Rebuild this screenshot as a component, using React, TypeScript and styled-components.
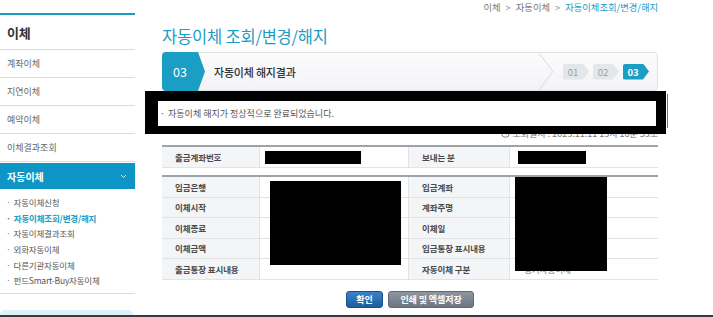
import React from 'react';
import styled, { createGlobalStyle, css } from 'styled-components';

const TEAL = '#1a9cc4';

const GlobalStyle = createGlobalStyle`
  * { box-sizing: border-box; }
  body {
    margin: 0;
    background: #fff;
    font-family: "Noto Sans CJK KR", "Noto Sans", sans-serif;
    color: #444;
  }
`;

const Page = styled.div`
  display: flex;
  height: 317px;
  overflow: hidden;
  border-bottom: 2px solid #3a3a3a;
`;

/* ---------- sidebar ---------- */

const Sidebar = styled.aside`
  width: 135px;
  flex-shrink: 0;
  padding-top: 13px;
  display: flex;
  flex-direction: column;
`;

const SideTitle = styled.div`
  height: 37px;
  border-top: 2px solid ${TEAL};
  border-bottom: 1px solid #dcdcdc;
  padding: 0 7px;
  display: flex;
  align-items: center;
  font-size: 13px;
  font-weight: 700;
  color: #333;
  letter-spacing: -0.3px;
`;

const MenuItem = styled.div`
  height: 28px;
  border-bottom: 1px solid #dcdcdc;
  padding: 0 7px;
  display: flex;
  align-items: center;
  font-size: 9px;
  color: #666;
`;

const ActiveMenu = styled.div`
  height: 26px;
  margin-top: 1px;
  background: #0c95c5;
  padding: 0 8px 0 7px;
  display: flex;
  align-items: center;
  justify-content: space-between;
  font-size: 10px;
  font-weight: 700;
  color: #fff;
`;

const SubList = styled.ul`
  list-style: none;
  margin: 0;
  padding: 6px 0 4px;
  border-bottom: 1px solid #dcdcdc;
`;

const SubItem = styled.li<{ $active?: boolean }>`
  height: 15.7px;
  line-height: 15.7px;
  padding-left: 6px;
  font-size: 8.5px;
  letter-spacing: -0.2px;
  color: #555;
  white-space: nowrap;
  ${({ $active }) =>
    $active &&
    css`
      color: ${TEAL};
      font-weight: 700;
    `}
  &::before {
    content: '·';
    margin-right: 3px;
    color: #777;
  }
`;

const SideBanner = styled.div`
  margin-top: 16px;
  width: 133px;
  flex: 1;
  background: #def0f9;
  border-radius: 5px 5px 0 0;
`;

/* ---------- main ---------- */

const Main = styled.main`
  flex: 1;
  padding: 0 55px 0 27px;
  display: flex;
  flex-direction: column;
`;

const Breadcrumb = styled.div`
  height: 14px;
  line-height: 14px;
  text-align: right;
  font-size: 9.3px;
  color: #777;
  white-space: nowrap;
`;

const Crumb = styled.span<{ $current?: boolean }>`
  color: ${({ $current }) => ($current ? TEAL : '#777')};
`;

const CrumbSep = styled.span`
  margin: 0 5px;
  color: #999;
`;

const Title = styled.h1`
  margin: 11px 0 0;
  height: 22px;
  line-height: 22px;
  font-size: 16.5px;
  font-weight: 400;
  color: ${TEAL};
  letter-spacing: -0.2px;
`;

const StepBar = styled.div`
  margin-top: 5px;
  height: 39px;
  border: 1px solid #dfe2e6;
  border-radius: 4px;
  background: linear-gradient(#fcfcfd, #f2f3f5);
  display: flex;
  align-items: center;
  padding-right: 8px;
`;

const StepTab = styled.div`
  align-self: stretch;
  margin: -1px 0 -1px -1px;
  width: 43px;
  padding-right: 7px;
  background: #1a9ec3;
  border-radius: 4px 0 0 4px;
  clip-path: polygon(0 0, 36px 0, 43px 50%, 36px 100%, 0 100%);
  display: flex;
  align-items: center;
  justify-content: center;
  color: #fff;
  font-size: 12.5px;
`;

const StepName = styled.div`
  margin-left: 9px;
  flex: 1;
  font-size: 11px;
  font-weight: 500;
  color: #333;
  letter-spacing: -0.2px;
`;

const StepDivider = styled.svg`
  align-self: stretch;
  width: 15px;
  margin-right: 9px;
`;

const Chips = styled.div`
  display: flex;
  gap: 4px;
`;

const Chip = styled.div<{ $on?: boolean }>`
  width: 26px;
  height: 16px;
  padding-right: 6px;
  border-radius: 2px;
  clip-path: polygon(0 0, 20px 0, 26px 50%, 20px 100%, 0 100%);
  display: flex;
  align-items: center;
  justify-content: center;
  font-size: 9.5px;
  background: ${({ $on }) => ($on ? '#1a9ec3' : '#e4e7ea')};
  color: ${({ $on }) => ($on ? '#fff' : '#9aa0a6')};
  font-weight: ${({ $on }) => ($on ? 700 : 400)};
`;

const Notice = styled.div`
  position: relative;
  z-index: 1;
  margin: 0 -8px 0 -17px;
  height: 43px;
  background: #000;
  padding: 10px 10px 8px 13px;
  &::after {
    content: '';
    position: absolute;
    right: -2px;
    top: 3px;
    bottom: 6px;
    width: 1.5px;
    background: #e0453c;
  }
`;

const NoticeText = styled.div`
  height: 25px;
  line-height: 25px;
  background: #fff;
  padding-left: 2px;
  font-size: 9px;
  color: #555;
  white-space: nowrap;
  &::before {
    content: '·';
    margin-right: 3px;
  }
`;

const DateRow = styled.div`
  margin-top: -6px;
  height: 11px;
  display: flex;
  justify-content: flex-end;
  align-items: center;
  gap: 3px;
  font-size: 9px;
  color: #777;
  white-space: nowrap;
`;

const InfoTable = styled.div<{ $rowHeight: number; $gap: number }>`
  position: relative;
  margin-top: ${({ $gap }) => $gap}px;
  display: grid;
  grid-template-columns: 98px 149px 101px 1fr;
  grid-auto-rows: ${({ $rowHeight }) => $rowHeight}px;
  border-top: 2px solid #9ea3a9;
`;

const Label = styled.div`
  background: #f4f5f7;
  border-bottom: 1px solid #e1e3e6;
  border-right: 1px solid #e1e3e6;
  padding-left: 13px;
  display: flex;
  align-items: center;
  font-size: 8.5px;
  font-weight: 700;
  color: #4a4a4a;
  letter-spacing: -0.1px;
  white-space: nowrap;
`;

const Value = styled.div<{ $divider?: boolean; $pad?: number }>`
  border-bottom: 1px solid #e1e3e6;
  border-right: ${({ $divider }) => ($divider ? '1px solid #e1e3e6' : 'none')};
  padding-left: ${({ $pad = 8 }) => $pad}px;
  display: flex;
  align-items: center;
  font-size: 8.5px;
  color: #777;
`;

const InlineMask = styled.span<{ $w: number }>`
  display: block;
  width: ${({ $w }) => $w}px;
  height: 13px;
  background: #000;
`;

const BlockMask = styled.div<{ $left: number; $top: number; $w: number; $h: number }>`
  position: absolute;
  left: ${({ $left }) => $left}px;
  top: ${({ $top }) => $top}px;
  width: ${({ $w }) => $w}px;
  height: ${({ $h }) => $h}px;
  background: #000;
`;

const ButtonRow = styled.div`
  margin-top: 11px;
  display: flex;
  justify-content: center;
  gap: 5px;
`;

const Button = styled.button<{ $primary?: boolean; $w: number }>`
  width: ${({ $w }) => $w}px;
  height: 17px;
  padding: 0;
  border-radius: 3px;
  font-family: inherit;
  font-size: 9px;
  font-weight: 700;
  color: #fff;
  letter-spacing: -0.1px;
  ${({ $primary }) =>
    $primary
      ? css`
          background: linear-gradient(#3a83c8, #1c5d9e);
          border: 1px solid #1b4f86;
        `
      : css`
          background: linear-gradient(#8d97a2, #6c7682);
          border: 1px solid #5f6873;
        `}
`;

const leftRows = ['입금은행', '이체시작', '이체종료', '이체금액', '출금통장 표시내용'];
const rightRows = ['입금계좌', '계좌주명', '이체일', '입금통장 표시내용', '자동이체 구분'];

export default function App() {
  return (
    <>
      <GlobalStyle />
      <Page>
        <Sidebar>
          <SideTitle>이체</SideTitle>
          <MenuItem>계좌이체</MenuItem>
          <MenuItem>지연이체</MenuItem>
          <MenuItem>예약이체</MenuItem>
          <MenuItem>이체결과조회</MenuItem>
          <ActiveMenu>
            자동이체
            <svg width="7" height="5" viewBox="0 0 7 5">
              <polyline points="1,1 3.5,3.5 6,1" fill="none" stroke="#cfeaf5" strokeWidth="1" />
            </svg>
          </ActiveMenu>
          <SubList>
            <SubItem>자동이체신청</SubItem>
            <SubItem $active>자동이체조회/변경/해지</SubItem>
            <SubItem>자동이체결과조회</SubItem>
            <SubItem>외화자동이체</SubItem>
            <SubItem>다른기관자동이체</SubItem>
            <SubItem>펀드Smart-Buy자동이체</SubItem>
          </SubList>
          <SideBanner />
        </Sidebar>

        <Main>
          <Breadcrumb>
            <Crumb>이체</Crumb>
            <CrumbSep>&gt;</CrumbSep>
            <Crumb>자동이체</Crumb>
            <CrumbSep>&gt;</CrumbSep>
            <Crumb $current>자동이체조회/변경/해지</Crumb>
          </Breadcrumb>
          <Title>자동이체 조회/변경/해지</Title>

          <StepBar>
            <StepTab>03</StepTab>
            <StepName>자동이체 해지결과</StepName>
            <StepDivider viewBox="0 0 15 39" preserveAspectRatio="none">
              <polyline points="0,0 14,19.5 0,39" fill="none" stroke="#d6d9dd" strokeWidth="1" />
            </StepDivider>
            <Chips>
              <Chip>01</Chip>
              <Chip>02</Chip>
              <Chip $on>03</Chip>
            </Chips>
          </StepBar>

          <Notice>
            <NoticeText>자동이체 해지가 정상적으로 완료되었습니다.</NoticeText>
          </Notice>
          <DateRow>
            <svg width="9" height="9" viewBox="0 0 9 9">
              <circle cx="4.5" cy="4.5" r="3.8" fill="none" stroke="#777" strokeWidth="0.9" />
              <polyline points="4.5,2.3 4.5,4.6 6.2,5.4" fill="none" stroke="#777" strokeWidth="0.8" />
            </svg>
            조회일시 : 2023.11.11 13시 16분 53초
          </DateRow>

          <InfoTable $rowHeight={21} $gap={6}>
            <Label>출금계좌번호</Label>
            <Value $divider $pad={5}>
              <InlineMask $w={96} />
            </Value>
            <Label>보내는 분</Label>
            <Value>
              <InlineMask $w={68} />
            </Value>
          </InfoTable>

          <InfoTable $rowHeight={20.5} $gap={7}>
            {leftRows.map((label, i) => (
              <React.Fragment key={label}>
                <Label>{label}</Label>
                <Value $divider />
                <Label>{rightRows[i]}</Label>
                <Value $pad={14}>{i === 4 ? '정기자동이체' : ''}</Value>
              </React.Fragment>
            ))}
            <BlockMask $left={108} $top={4} $w={131} $h={84} />
            <BlockMask $left={353} $top={0} $w={92} $h={94} />
          </InfoTable>

          <ButtonRow>
            <Button $primary $w={37}>확인</Button>
            <Button $w={86}>인쇄 및 엑셀저장</Button>
          </ButtonRow>
        </Main>
      </Page>
    </>
  );
}
